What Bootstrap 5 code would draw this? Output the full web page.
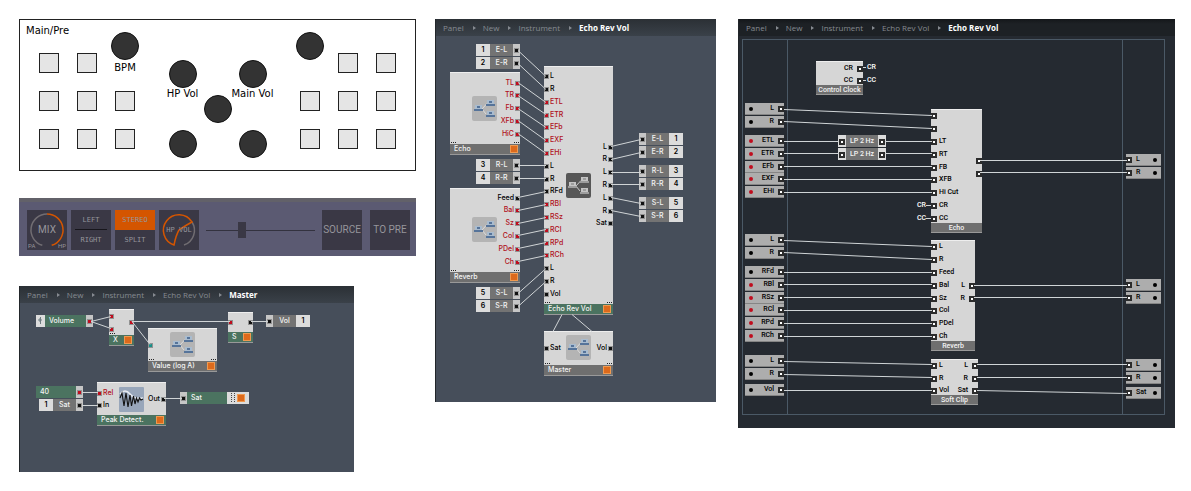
<!DOCTYPE html>
<html lang="en">
<head>
<meta charset="utf-8">
<meta name="viewport" content="width=device-width, initial-scale=1">
<title>Echo Rev Vol – controller and signal structure</title>
<link href="https://cdn.jsdelivr.net/npm/bootstrap@5.3.0/dist/css/bootstrap.min.css" rel="stylesheet">
<style>
  body { background: #fff; color: #000; font-family: "DejaVu Sans", sans-serif; font-size: 10px; line-height: 12px; }
  button { border: 0; padding: 0; }

  .board { display: grid; grid-template-columns: minmax(0, 1fr); gap: 19px; padding: 19px 16px 16px 19px; align-items: start; }
  @media (min-width: 992px) { .board { grid-template-columns: minmax(0, 397fr) minmax(0, 281fr) minmax(0, 440fr); } .board-end { padding-left: 3px; } }

  /* hardware controller */
  .deck { border: 1px solid #222; height: 152px; padding: 33px 19px 0; margin-bottom: 27px; }
  .deck-name { top: 5px; left: 6px; }
  .pad-grid { display: grid; grid-template-columns: repeat(3, 20px); grid-auto-rows: 20px; gap: 18px; }
  .pad-key { background: #e5e5e5; border: 1px solid #222; }
  .knob-grid { display: grid; grid-template-columns: repeat(3, 28px); grid-auto-rows: 28px; gap: 7px; margin-top: 7px; }
  .dial { width: 28px; height: 28px; border-radius: 50%; background: #333; border: 1px solid #111; display: block; }
  .dial-name { top: 100%; left: 50%; transform: translateX(-50%); white-space: nowrap; }
  .dial-raised { margin: -21px 0 0 -4px; }
  .dial-raised + .dial-name { top: 9px; }

  /* software mixer strip */
  .strip { background: #5b5a72; border-top: 4px solid #626169; height: 58px; padding: 8px 6px 0 8px; margin-bottom: 30px; font-family: Roboto, sans-serif; color: #96959b; gap: 4px; }
  .strip button { color: inherit; }
  .tile { width: 40px; height: 40px; flex: none; background: #3a3845; font-size: 10px; }
  .tile-half { height: 20px; width: 40px; background: none; font: 7px/20px "DejaVu Sans Mono", monospace; }
  .tile-half.is-on { background: #d45500; }
  .tile-rule { height: 1px; margin: -1px 4px 0; background: #17161c; }
  .tile svg { position: absolute; inset: 0; }
  .tile-small { font: 7px/8px "DejaVu Sans Mono", monospace; }
  .tile-mark { position: absolute; bottom: 0; padding: 0 1px; font-size: 6px; line-height: 8px; }
  .fader { appearance: none; background: none; height: 20px; width: 0; margin: 0 3px; flex: 1 1 0; }
  .fader::-webkit-slider-runnable-track { height: 1px; background: #33323f; }
  .fader::-webkit-slider-thumb { appearance: none; width: 8px; height: 16px; margin-top: -8px; background: #3a3845; }

  /* structure windows */
  .pane { background: #464e5a; border-left: 1px solid #22262a; overflow: hidden; }
  .pane-narrow { margin-right: 62px; }
  .pane-core { background: #252a31; }
  .trail { height: 17px; padding-left: 7px; background: linear-gradient(#2b3035, #3a4149); font: 8px/18px "Open Sans", sans-serif; }
  .pane-core .trail { background: linear-gradient(#14171a, #1d2125 30%); }
  .trail ol { margin: 0; padding: 0; list-style: none; white-space: nowrap; }
  .trail a { color: #868b91; text-decoration: none; }
  .trail li + li::before { content: ""; width: 0; height: 0; border: 2px solid transparent; border-left: 3px solid #868b91; border-right: 0; margin: 0 7px 0 9px; }
  .trail .here { color: #fff; font-weight: 700; }

  .sheet { position: relative; font: 500 7px/10px Inter, sans-serif; color: #000; }
  .sheet > svg { position: absolute; inset: 0; width: 100%; height: 100%; pointer-events: none; }
  .wire { stroke: #d0d4d6; stroke-width: 1; fill: none; }
  .rail { stroke: #4b5966; fill: none; }
  .unit, .tag, .free { position: absolute; white-space: nowrap; }
  .unit { background: #d6d6d6; border-top: 1px solid #eee; }
  .unit-name { position: absolute; left: 0; right: 0; bottom: 0; height: 11px; padding: 0 2px 0 4px; background: #6f6f6f; color: #f4f4f4; border-bottom: 1px solid #999; }
  .green { background: #4b7360 !important; color: #f4f4f4; }
  .lamp { width: 8px; height: 8px; background: #dd6a1c; border: 1px solid #f09a50; flex: none; }
  .jack { position: absolute; width: 5px; height: 5px; border: 1px solid #929292; background: #111; }
  .red .jack, .jack.red { background: #c00d1e; }
  .jack.teal { background: #1a8f88; }
  .pin { position: absolute; height: 10px; }
  .pin.red { color: #b01020; }
  .pin-in { left: 0; padding-left: 6px; }
  .pin-out { right: 0; padding-right: 6px; }
  .pin .jack { top: 3px; }
  .pin-in .jack { left: 0; }
  .pin-out .jack { right: 0; }
  .more { position: absolute; bottom: 12px; width: 5px; height: 1px; margin: 0 1px; background: repeating-linear-gradient(90deg, #222 0 1px, transparent 1px 2px); }
  .tag { display: flex; height: 12px; line-height: 12px; background: #dcdcdc; }
  .tag-no { width: 14px; text-align: center; font-weight: 600; }
  .tag-name { flex: 1; background: #737373; color: #f4f4f4; text-align: center; }
  .tag-name.green { text-align: left; padding-left: 4px; }
  .tag-jack { width: 7px; position: relative; background: #c6c6c6; }
  .tag-jack .jack { top: 4px; left: 1px; }
  .glyph { position: absolute; width: 25px; height: 25px; }

  .pane-core .sheet { font-family: Roboto, sans-serif; }
  .pane-core .unit-name { height: 10px; line-height: 10px; padding: 0; justify-content: center !important; }
  .pane-core .jack { width: 6px; height: 6px; border: 2px solid #2c2c2c; background: #fff; }
  .pane-core .pin-in { padding-left: 8px; } .pane-core .pin-out { padding-right: 10px; }
  .pane-core .tag-jack { width: 8px; background: #dcdcdc; }
  .free { color: #fff; }
  .plug { background: #adadad; border-bottom: 1px solid #858585; align-items: center; line-height: 11px; }
  .plug .jack { position: static; flex: none; }
  .dot { width: 4px; height: 4px; border-radius: 50%; background: #000; }
  .dot.red { background: #c00d1e; }
</style>
</head>
<body>
<main class="board">
  <div>
    <section class="deck position-relative d-flex justify-content-between" aria-label="Controller">
      <span class="deck-name position-absolute">Main/Pre</span>
      <div class="pad-grid">
        <button class="pad-key" aria-label="Pad L1"></button><button class="pad-key" aria-label="Pad L2"></button>
        <span class="position-relative"><button class="dial dial-raised" aria-label="BPM"></button><span class="dial-name position-absolute">BPM</span></span>
        <button class="pad-key" aria-label="Pad L3"></button><button class="pad-key" aria-label="Pad L4"></button><button class="pad-key" aria-label="Pad L5"></button>
        <button class="pad-key" aria-label="Pad L6"></button><button class="pad-key" aria-label="Pad L7"></button><button class="pad-key" aria-label="Pad L8"></button>
      </div>
      <div class="knob-grid">
        <span class="position-relative"><button class="dial" aria-label="HP Vol"></button><span class="dial-name position-absolute">HP Vol</span></span>
        <span></span>
        <span class="position-relative"><button class="dial" aria-label="Main Vol"></button><span class="dial-name position-absolute">Main Vol</span></span>
        <span></span><button class="dial" aria-label="Centre dial"></button><span></span>
        <button class="dial" aria-label="Lower left dial"></button><span></span><button class="dial" aria-label="Lower right dial"></button>
      </div>
      <div class="pad-grid">
        <button class="dial dial-raised" aria-label="Upper right dial"></button><button class="pad-key" aria-label="Pad R1"></button><button class="pad-key" aria-label="Pad R2"></button>
        <button class="pad-key" aria-label="Pad R3"></button><button class="pad-key" aria-label="Pad R4"></button><button class="pad-key" aria-label="Pad R5"></button>
        <button class="pad-key" aria-label="Pad R6"></button><button class="pad-key" aria-label="Pad R7"></button><button class="pad-key" aria-label="Pad R8"></button>
      </div>
    </section>

    <section class="strip d-flex" aria-label="Mixer strip">
      <button class="tile position-relative">
        <svg viewBox="0 0 40 40" fill="none" stroke-width="1.5"><path d="M15.3 35.3A16 16 0 0 1 20 4" stroke="#716d72"/><path d="M20 4A16 16 0 0 1 24.7 35.3" stroke="#d45500"/></svg>
        <span class="position-relative">MIX</span><span class="tile-mark start-0">PA</span><span class="tile-mark end-0">HP</span>
      </button>
      <div class="tile"><button class="tile-half d-block">LEFT</button><div class="tile-rule"></div><button class="tile-half d-block">RIGHT</button></div>
      <div class="tile"><button class="tile-half is-on d-block">STEREO</button><button class="tile-half d-block">SPLIT</button></div>
      <button class="tile tile-small position-relative">
        <svg viewBox="0 0 40 40" fill="none" stroke-width="1.5"><path d="M33 12A15.500 15.500 0 0 1 25 35" stroke="#716d72"/><path d="M15 35A15.500 15.500 0 1 1 33 12Q24 17 20 20Q17 25 15 35Z" stroke="#d45500"/></svg>
        <span class="position-relative">HP VOL</span>
      </button>
      <input class="fader mt-2 pt-1" type="range" min="0" max="100" value="32" aria-label="Crossfade">
      <button class="tile">SOURCE</button>
      <button class="tile ms-1">TO PRE</button>
    </section>

    <section class="pane pane-narrow">
      <nav class="trail" aria-label="Master path"><ol class="d-flex">
        <li class="d-flex align-items-center"><a href="#">Panel</a></li><li class="d-flex align-items-center"><a href="#">New</a></li><li class="d-flex align-items-center"><a href="#">Instrument</a></li><li class="d-flex align-items-center"><a href="#">Echo Rev Vol</a></li><li class="d-flex align-items-center here" aria-current="page">Master</li>
      </ol></nav>
      <div class="sheet" id="master"></div>
    </section>
  </div>

  <section class="pane">
    <nav class="trail" aria-label="Instrument path"><ol class="d-flex">
      <li class="d-flex align-items-center"><a href="#">Panel</a></li><li class="d-flex align-items-center"><a href="#">New</a></li><li class="d-flex align-items-center"><a href="#">Instrument</a></li><li class="d-flex align-items-center here" aria-current="page">Echo Rev Vol</li>
    </ol></nav>
    <div class="sheet" id="instrument"></div>
  </section>

  <div class="board-end">
    <section class="pane pane-core">
      <nav class="trail" aria-label="Core path"><ol class="d-flex">
        <li class="d-flex align-items-center"><a href="#">Panel</a></li><li class="d-flex align-items-center"><a href="#">New</a></li><li class="d-flex align-items-center"><a href="#">Instrument</a></li><li class="d-flex align-items-center"><a href="#">Echo Rev Vol</a></li><li class="d-flex align-items-center here" aria-current="page">Echo Rev Vol</li>
      </ol></nav>
      <div class="sheet" id="core"></div>
    </section>
  </div>
</main>

<script>
  // Each sheet is a free canvas: nodes carry world coordinates, "view" is the scroll origin.
  const macro = (bg, screen, base) => `<svg class="d-block" viewBox="0 0 25 25"><rect width="25" height="25" rx="2" fill="${bg}"/>
    <path d="M10 13L15 7.500M10 13L14 18" stroke="#e4e4e4" stroke-width=".8"/>
    ${[[2, 9], [14, 4], [14, 15]].map(([x, y]) => `<rect x="${x + 1}" y="${y}" width="7" height="5" fill="${screen}"/><rect x="${x + 3}" y="${y + 1}" width="3" height="2" fill="${base}"/><rect x="${x}" y="${y + 4}" width="9" height="2" fill="${base}"/>`).join('')}</svg>`;
  const glyphs = {
    macro: macro('#b4b4b4', '#a9bccf', '#56749a'),
    dark: macro('#575757', '#c4c4c4', '#9d9d9d'),
    wave: `<svg class="d-block" viewBox="0 0 25 25"><rect width="25" height="25" rx="1" fill="#98a6ba"/><path d="M1 7Q6 1 11 7T24 11" stroke="#e8ecf2" stroke-width="1.500" fill="none"/><path d="M1 11L3 6L5 19L7 6L9 20L11 8L12.500 19L14.500 9L16 17L17.500 11L19 15L20.500 11L22 13L24 12" stroke="#111" stroke-width="1.100" fill="none"/></svg>`
  };
  const px = (x, y, w, h) => `left:${Math.round(x)}px;top:${Math.round(y)}px;width:${w}px${h ? `;height:${h}px` : ''}`;

  function unit(n, ox, oy) {
    const pins = (list, side) => (list || []).map(([label, y, tone]) =>
      `<span class="pin pin-${side} ${tone === 'teal' ? '' : tone || ''}" style="top:${Math.round(y) - n.y - 6}px">${label}<i class="jack ${tone || ''}"></i></span>`).join('');
    return `<div class="unit" style="${px(n.x - ox, n.y - oy, n.w, n.h)}">
      ${n.glyph ? `<span class="glyph" style="left:${n.gx}px;top:${n.gy}px">${glyphs[n.glyph]}</span>` : ''}
      ${pins(n.in, 'in')}${pins(n.out, 'out')}
      ${n.more ? '<i class="more start-0"></i>' : ''}${n.more > 1 ? '<i class="more end-0"></i>' : ''}
      <div class="unit-name d-flex align-items-center justify-content-between ${n.green ? 'green' : ''}"><span>${n.name}</span>${n.lamp ? '<i class="lamp"></i>' : ''}</div></div>`;
  }
  const jack = tone => `<span class="tag-jack"><i class="jack ${tone || ''}"></i></span>`;
  function tag(n, ox, oy) {
    const name = `<span class="tag-name ${n.green ? 'green' : ''}">${n.name}</span>`;
    const no = n.no ? `<span class="tag-no">${n.no}</span>` : '';
    const body = {
      in: no + (n.lead || '') + name + jack(n.tone),
      out: jack(n.tone) + name + no + (n.tail || ''),
      thru: jack() + name + jack()
    }[n.kind];
    return `<div class="tag" style="${px(n.x - ox, n.y - oy, n.w || 44)}">${body}</div>`;
  }
  function plug(n, ox, oy) {
    const parts = [`<i class="dot ${n.tone || ''}"></i>`, `<span class="${n.out ? 'flex-fill' : 'ms-auto me-1'}">${n.name}</span>`, '<i class="jack"></i>'];
    if (n.out) parts.reverse();
    return `<div class="tag plug ${n.out ? 'pe-1 gap-1' : 'ps-1'}" style="${px(n.x - ox, n.y - oy, n.out ? 35 : 39)}">${parts.join('')}</div>`;
  }
  function draw(id, s) {
    const [ox, oy] = s.view, el = document.getElementById(id);
    el.style.height = s.height + 'px';
    el.innerHTML = (s.units || []).map(n => unit(n, ox, oy)).join('') +
      (s.tags || []).map(n => tag(n, ox, oy)).join('') +
      (s.plugs || []).map(n => plug(n, ox, oy)).join('') +
      (s.free || []).map(([t, x, y]) => `<span class="free" style="left:${x - ox}px;top:${y - oy}px">${t}</span>`).join('') +
      `<svg aria-hidden="true"><g transform="translate(${-ox} ${-oy})">${s.rails || ''}${s.wires.map(([a, b, c, d]) => `<path class="wire" d="M${a} ${b + .5}L${c} ${d + .5}"/>`).join('')}</g></svg>`;
  }

  draw('master', {
    view: [20, 303], height: 169,
    units: [
      { name: 'X', x: 109, y: 309, w: 25, h: 37, green: 1, lamp: 1, more: 1, in: [['', 316, 'red'], ['', 329, 'red']], out: [['', 322, 'red']] },
      { name: 'Value (log A)', x: 148, y: 328, w: 69, h: 44, lamp: 1, more: 2, glyph: 'macro', gx: 22, gy: 3, in: [['', 345, 'teal']] },
      { name: 'S', x: 228, y: 312, w: 25, h: 31, green: 1, lamp: 1, in: [['', 322, 'red']], out: [['', 322]] },
      { name: 'Peak Detect.', x: 97, y: 382, w: 69, h: 44, green: 1, lamp: 1, glyph: 'wave', gx: 22, gy: 4, in: [['Rel', 393, 'red'], ['In', 405]], out: [['Out', 399]] }
    ],
    tags: [
      { kind: 'in', name: 'Volume', x: 36, y: 315, w: 57, green: 1, tone: 'red', lead: '<svg width="9" height="12"><path d="M4.500 2v7M3 4h2v2H3z" stroke="#6f7d80" fill="#ccd5d8"/></svg>' },
      { kind: 'out', name: 'Vol', no: 1, x: 266, y: 315 },
      { kind: 'in', name: '40', x: 36, y: 386, w: 47, green: 1, tone: 'red' },
      { kind: 'in', name: 'Sat', no: 1, x: 39, y: 399 },
      { kind: 'out', name: 'Sat', x: 180, y: 392, w: 69, green: 1, tail: '<span class="d-flex align-items-center justify-content-between ps-1 pe-1" style="width:22px"><svg width="4" height="10"><path d="M.500 0v10M3.500 0v10" stroke="#444" stroke-dasharray="1 1"/></svg><i class="lamp"></i></span>' }
    ],
    wires: [[91, 321, 111, 316], [91, 321, 111, 328], [132, 321, 230, 321], [132, 321, 150, 344], [251, 321, 268, 321], [82, 392, 98, 392], [82, 405, 98, 405], [164, 398, 182, 398]]
  });

  const L = (y, i) => Math.round(y + 12.8 * i);
  const run = (names, y, red) => names.map((n, i) => [n, L(y, i), red(i) ? 'red' : '']);
  const none = () => false, all = () => true;
  const link = (xa, ya, xb, yb, count) => Array.from({ length: count }, (_, i) => [xa, L(ya, i), xb, L(yb, i)]);
  const pair = (kind, names, nos, x, y) => names.map((name, i) => ({ kind, name, no: nos[i], x, y: L(y, i) }));

  draw('instrument', {
    view: [436, 36], height: 366,
    units: [
      { name: 'Echo', x: 450, y: 72, w: 70, h: 83, lamp: 1, more: 2, glyph: 'macro', gx: 22, gy: 23, out: run(['TL', 'TR', 'Fb', 'XFb', 'HiC'], 82.500, all) },
      { name: 'Reverb', x: 450, y: 188, w: 70, h: 95, lamp: 1, more: 2, glyph: 'macro', gx: 22, gy: 28, out: run(['Feed', 'Bal', 'Sz', 'Col', 'PDel', 'Ch'], 197.500, i => i > 0) },
      { name: 'Echo Rev Vol', x: 544, y: 66, w: 69, h: 249, green: 1, lamp: 1, more: 2, glyph: 'dark', gx: 22, gy: 106,
        in: run(['L', 'R', 'ETL', 'ETR', 'EFb', 'EXF', 'EHi', 'L', 'R', 'RFd', 'RBl', 'RSz', 'RCl', 'RPd', 'RCh', 'L', 'R', 'Vol'], 76.200, i => (i > 1 && i < 7) || (i > 9 && i < 15)),
        out: run(['L', 'R', 'L', 'R', 'L', 'R', 'Sat'], 146.500, none) },
      { name: 'Master', x: 544, y: 331, w: 69, h: 45, lamp: 1, more: 2, glyph: 'macro', gx: 22, gy: 3, in: [['Sat', 348]], out: [['Vol', 348]] }
    ],
    tags: [
      ...pair('in', ['E-L', 'E-R'], [1, 2], 476, 44), ...pair('in', ['R-L', 'R-R'], [3, 4], 476, 159), ...pair('in', ['S-L', 'S-R'], [5, 6], 476, 287),
      ...pair('out', ['E-L', 'E-R'], [1, 2], 639, 133), ...pair('out', ['R-L', 'R-R'], [3, 4], 639, 165), ...pair('out', ['S-L', 'S-R'], [5, 6], 639, 197)
    ],
    wires: [
      ...link(518, 50, 546, 76, 2), ...link(518, 82, 546, 101.500, 5), ...link(518, 165, 546, 165, 2), ...link(518, 197, 546, 191, 6),
      ...link(518, 293, 546, 268, 2), ...link(611, 146, 641, 139, 2), ...link(611, 171.500, 641, 171.500, 2), ...link(611, 197, 641, 203, 2),
      [562, 314, 553, 331], [572, 314, 592, 331]
    ]
  });

  const plugs = (names, y, red, out) => names.map((name, i) => ({ name, out, x: out ? 1126 : 745, y: L(y, i) - 6, tone: red(i) ? 'red' : '' }));
  draw('core', {
    view: [739, 36], height: 392,
    rails: '<rect class="rail" x="742.500" y="39.500" width="422" height="375"/><path class="rail" d="M787.500 39V415M1122.500 39V415"/>',
    units: [
      { name: 'Control Clock', x: 816, y: 61, w: 47, h: 34, out: run(['CR', 'CC'], 67.500, none) },
      { name: 'Echo', x: 931, y: 109, w: 51, h: 124, in: run(['', '', 'LT', 'RT', 'FB', 'XFB', 'Hi Cut', 'CR', 'CC'], 115.400, none), out: run(['', ''], 160, none) },
      { name: 'Reverb', x: 931, y: 240, w: 44, h: 111, in: run(['L', 'R', 'Feed', 'Bal', 'Sz', 'Col', 'PDel', 'Ch'], 246.400, none), out: run(['L', 'R'], 284.700, none) },
      { name: 'Soft Clip', x: 931, y: 359, w: 47, h: 46, in: run(['L', 'R', 'Vol'], 364.700, none), out: run(['L', 'R', 'Sat'], 364.700, none) }
    ],
    tags: [{ kind: 'thru', name: 'LP 2 Hz', x: 838, y: 135, w: 48 }, { kind: 'thru', name: 'LP 2 Hz', x: 838, y: 148, w: 48 }],
    plugs: [
      ...plugs(['L', 'R'], 109, none), ...plugs(['ETL', 'ETR', 'EFb', 'EXF', 'EHi'], 141, all),
      ...plugs(['L', 'R'], 240, none), ...plugs(['RFd', 'RBl', 'RSz', 'RCl', 'RPd', 'RCh'], 272, i => i > 0),
      ...plugs(['L', 'R'], 361.400, none), ...plugs(['Vol'], 390, none),
      ...plugs(['L', 'R'], 160, none, 1), ...plugs(['L', 'R'], 284.700, none, 1), ...plugs(['L', 'R'], 364.700, none, 1), ...plugs(['Sat'], 393, none, 1)
    ],
    free: [['CR', 867, 62], ['CC', 867, 75], ['CR', 917, 200], ['CC', 917, 213]],
    wires: [
      ...link(863, 67, 866, 67, 2), ...link(926, 204.700, 931, 204.700, 2), ...link(784, 108.500, 932, 115, 2),
      ...link(784, 140.500, 839, 140.500, 2), ...link(885, 140.500, 932, 140.500, 2), ...link(784, 166, 932, 166, 3),
      ...link(784, 239.500, 932, 246, 2), ...link(784, 271.500, 932, 271.500, 6), ...link(784, 361, 932, 364, 2), [784, 390, 932, 390],
      ...link(980, 159.500, 1127, 159.500, 2), ...link(974, 284.500, 1127, 284.500, 2), ...link(977, 364, 1127, 364, 2), [977, 390, 1127, 393]
    ]
  });
</script>
<script src="https://cdn.jsdelivr.net/npm/bootstrap@5.3.0/dist/js/bootstrap.bundle.min.js"></script>
</body>
</html>
